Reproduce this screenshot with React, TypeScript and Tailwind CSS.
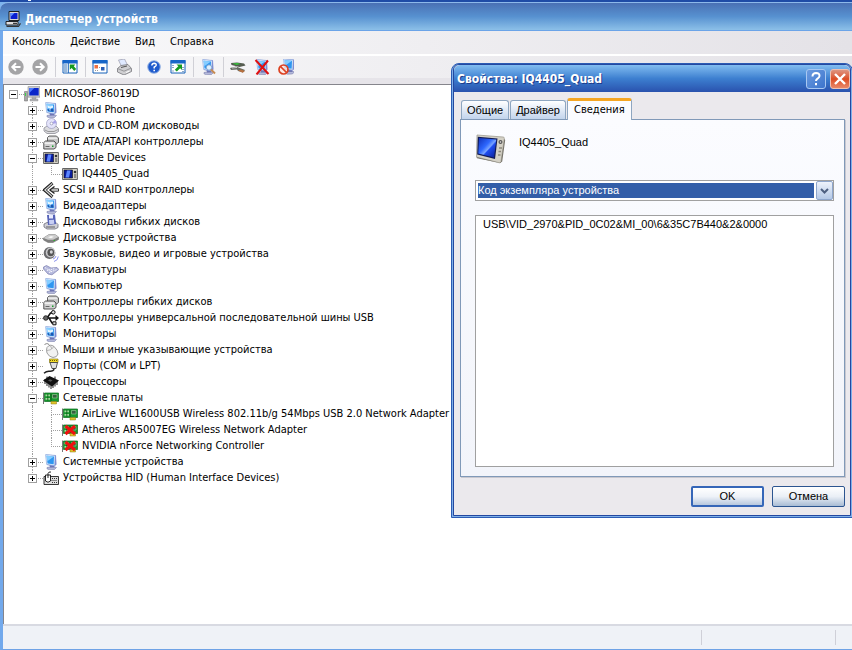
import React, { useState } from 'react';

type IconProps = { children: React.ReactNode; size?: string };

const Icon = ({ children, size = 'h-4 w-4' }: IconProps) => (
  <svg viewBox="0 0 16 16" className={`${size} shrink-0`} aria-hidden="true">
    {children}
  </svg>
);

/* ---------- Device icons ---------- */

const Monitor = () => (
  <>
    <path d="M4 13.500l6-1 3.500 1-2 2-5 .3-2.500-1z" fill="#b4b8da" stroke="#7a80ac" strokeWidth=".6" />
    <path d="M6.500 11h4.500l.5 2.500H7z" fill="#6f76b4" />
    <path d="M3 .6l10 .6.5 9.300-1.800 1.700L4 11z" fill="#7f8ad0" />
    <path d="M2.500 .6l9.600.8-.4 10.100-8-1z" fill="#e2f1ff" stroke="#86a4dc" strokeWidth=".6" />
    <path d="M3.600 1.800l7.400.6-.3 7.900-6.200-.8z" fill="#2f96f0" />
    <path d="M3.600 1.800l7.400.6-6.700 4.800z" fill="#86cdff" />
  </>
);

const ComputerIcon = () => <Icon><Monitor /></Icon>;

const DisplayIcon = () => (
  <Icon>
    <Monitor />
    <path d="M4.500 3.500l2.500 1 3-1v2l-2 1.500-3-1z" fill="#e6f6ff" />
    <path d="M4.500 7l2 .5 2-1 2 1v2.300l-5.500-.7z" fill="#1d55b0" />
    <path d="M6 7.800l2 .2" stroke="#9fe0ff" />
  </Icon>
);

const RootIcon = () => (
  <Icon>
    <path d="M.5 5.500h3V15h-3z" fill="#a8a8a8" stroke="#666" strokeWidth=".5" />
    <path d="M1.500 7v3" stroke="#3fd24a" />
    <path d="M4 .6h12v10.600H4z" fill="#cfcfd2" stroke="#8a8a8a" strokeWidth=".6" />
    <path d="M5.300 2h9.400v7.500H5.300z" fill="#0b26c9" />
    <path d="M5.300 2h5l-5 5z" fill="#4b78ff" />
    <path d="M8 11h4v2H8zM6 13h8v2H6z" fill="#b5b5b8" stroke="#909090" strokeWidth=".4" />
  </Icon>
);

const DvdIcon = () => (
  <Icon>
    <path d="M1 10l3-2h9l2.500 2.500v3L12 15.500H4L1 13z" fill="#dcdce0" stroke="#80808a" strokeWidth=".7" />
    <path d="M2 12l3 1.500h6l4-2" stroke="#888" strokeWidth=".8" fill="none" />
    <circle cx="8.500" cy="5.500" r="5" fill="#e4e4fa" stroke="#9a9abf" strokeWidth=".7" />
    <path d="M8.500 5.500L12 2a5 5 0 0 1 1.500 3.500z" fill="#a9a3ea" />
    <circle cx="8.500" cy="5.500" r="1.400" fill="#fff" stroke="#7f7fa8" strokeWidth=".6" />
  </Icon>
);

const DriveStackIcon = () => (
  <Icon>
    <path d="M4.500 3.500l1.500-1.500h7.500l2 2v4.500l-2 1.500h-9z" fill="#c8c8c8" stroke="#555" strokeWidth=".9" />
    <path d="M5 3.500h8.500l1 1.200H5z" fill="#f4f4f4" />
    <path d="M.8 8.500l1.700-1.500h8.500l2 2v4.500l-2 1.500H.8z" fill="#d0d0d0" stroke="#444" strokeWidth=".9" />
    <path d="M1.500 8.500h9l1.200 1.200H1.500z" fill="#fafafa" />
    <path d="M2.500 12.500h4" stroke="#666" />
    <path d="M9 11.500h1.500v1.500H9z" fill="#1b9b2b" />
  </Icon>
);

const PortableIcon = () => (
  <Icon>
    <path d="M.6 2.500h14.800v11H.6z" fill="#d6d3c8" stroke="#555" strokeWidth=".9" />
    <path d="M2 4h8.500v8H2z" fill="#0a1c9c" stroke="#111" strokeWidth=".6" />
    <path d="M5 4.500h3.500l-1.500 7H3.500z" fill="#5c86ff" />
    <circle cx="13" cy="6" r="1.300" fill="#333" />
    <path d="M12 9h2.200M12 11h2.200" stroke="#444" />
  </Icon>
);

const ScsiIcon = () => (
  <Icon>
    <path d="M9.500 1L1.500 8l8 7" fill="none" stroke="#222" strokeWidth="3" />
    <path d="M9.300 1.400L1.900 8l7.400 6.600" fill="none" stroke="#d8d8d8" strokeWidth="1.200" />
    <path d="M11.500 4.500L7 8l4.500 3.500" fill="none" stroke="#222" strokeWidth="1.400" />
    <path d="M8 6.800h7.500v2.400H8z" fill="#eee" stroke="#222" strokeWidth=".9" />
  </Icon>
);

const FloppyIcon = () => (
  <Icon>
    <path d="M1 10l3-1.500h9l2 2v3L12 15H4l-3-2z" fill="#cfcfd6" stroke="#6c6c78" strokeWidth=".8" />
    <path d="M4 1l8-.5 1 9.500-8 1z" fill="#5663b8" />
    <path d="M6 1h4v3.500H6z" fill="#e8ebff" />
    <path d="M6 6l5-.3.3 4-5 .5z" fill="#c9d0f5" />
    <path d="M3 13h9" stroke="#555" strokeWidth=".9" />
  </Icon>
);

const DiskIcon = () => (
  <Icon>
    <path d="M.5 8L6 4.500h6l3.500 2.500v2.500L10 12.500H5L.5 10z" fill="#808080" stroke="#666" strokeWidth=".5" />
    <path d="M.5 8L6 4.500h6L15.500 7 10 9.800H5z" fill="#cccccc" />
    <path d="M5 7.200l3-1.200 3 .8-3 1.500z" fill="#f6f6f6" />
    <path d="M10.500 11h1.500v-1h-1.500z" fill="#2bb12b" />
  </Icon>
);

const SoundIcon = () => (
  <Icon>
    <ellipse cx="6.500" cy="7" rx="5.800" ry="6" fill="#6b6b6e" />
    <ellipse cx="7.500" cy="6.500" rx="4.700" ry="5" fill="#c9c9cc" />
    <ellipse cx="7.800" cy="6.500" rx="3.400" ry="3.800" fill="#555" />
    <ellipse cx="8.300" cy="6" rx="1.500" ry="1.800" fill="#d5d5d8" />
    <path d="M10 13q2.500-.5 3-3M11 15.500q4-1 4.300-5" fill="none" stroke="#8d93ee" />
  </Icon>
);

const KeyboardIcon = () => (
  <Icon>
    <path d="M.5 5l3-1.500L8 6l6-.5 1.800 2L9 12.800 5 12 .5 7z" fill="#b4b8dc" stroke="#7c80b0" strokeWidth=".7" />
    <path d="M2 5.500l7 4.500M4 8.500l8-2M6 10.500l8-3" stroke="#fff" strokeWidth=".9" strokeDasharray="1.200 .8" />
  </Icon>
);

const UsbIcon = () => (
  <Icon>
    <path d="M2 8h12M4 8l3.500-5H10M6 8l3 5h2" fill="none" stroke="#111" strokeWidth="1.500" />
    <circle cx="2.800" cy="8" r="2.300" fill="#666" stroke="#111" strokeWidth=".8" />
    <path d="M12.500 5L16 8l-3.500 3z" fill="#111" />
    <circle cx="10.300" cy="2.300" r="1.800" fill="#ddd" stroke="#111" />
    <path d="M9.800 11.800H13v3H9.800z" fill="#ddd" stroke="#111" />
  </Icon>
);

const MouseIcon = () => (
  <Icon>
    <path d="M1.500 2.500q4-2.500 5.500 2" stroke="#777" strokeWidth=".9" fill="none" />
    <path d="M4 5.500q3-4 7-1 4 3.500 4 7.500-1 3.500-5 3.500-4-.5-6-4.500-1-3 0-5.500z" fill="#f2f2f2" stroke="#888" strokeWidth=".8" />
    <path d="M4 8.500q4 .5 7-4M7.500 4l1.500 3" stroke="#999" strokeWidth=".7" fill="none" />
  </Icon>
);

const PortIcon = () => (
  <Icon>
    <path d="M6.500 1h8.500v3.500H6.500z" fill="#f5dc2a" stroke="#6f6100" strokeWidth=".6" />
    <path d="M7 2.500h7" stroke="#6f6100" strokeDasharray="1 1" />
    <path d="M7 4.500h7.500L13 10.500H9z" fill="#e0e0e0" stroke="#333" strokeWidth=".8" />
    <path d="M11 10.500q0 3-4.500 2.700-3-.3-5.500 2" fill="none" stroke="#222" strokeWidth="1.500" />
  </Icon>
);

const CpuIcon = () => (
  <Icon>
    <path d="M2 7v3M4 8v4M6 9.500v4M8 11v4M10 10v4M12 8.500v4M14 7v4M4 2.500v3M12 2.500v3M2 5v2" stroke="#333" strokeWidth="1.100" />
    <path d="M0 6.500L6.500 2 16 6.500 9 12.500z" fill="#111" />
    <path d="M5 6.500l2-1.300 2.500 1.200-2 1.400z" fill="#555" />
  </Icon>
);

const Card = () => (
  <>
    <path d="M.5 2.500V14" stroke="#777" />
    <path d="M1.500 3h14v8.500h-14z" fill="#189a2e" stroke="#0a6a1c" strokeWidth=".7" />
    <path d="M2.500 4.500h4.500v1.700H2.500zM2.500 8h4.500v1.700H2.500z" fill="#a4dc9c" />
    <path d="M4.800 4v6.500M8 4v7" stroke="#075214" strokeWidth=".8" />
    <path d="M9.500 4.500h4.500v3.500H9.500z" fill="#37603f" stroke="#9fd09a" strokeWidth=".6" />
    <path d="M8 11.500h5.500V14H8z" fill="#e2c52b" stroke="#8f7a10" strokeWidth=".5" />
  </>
);

const NetIcon = () => <Icon><Card /></Icon>;

const NetDisabledIcon = () => (
  <Icon>
    <Card />
    <path d="M3.500 4l9.500 8M13 4l-9.500 8" stroke="#f01010" strokeWidth="3" />
  </Icon>
);

const HidIcon = () => (
  <Icon>
    <path d="M1 6.500h14.500v8H1z" fill="#ddd" stroke="#222" strokeWidth=".9" />
    <path d="M9 8.500h6M8.500 10.500h6M9 12.500h6" stroke="#333" strokeWidth="1" strokeDasharray="1 1" />
    <path d="M2.500 5h5v6q-2.500 2.500-5 0z" fill="#fff" stroke="#111" strokeWidth=".9" />
    <path d="M5 8V3.500q.5-2 3-1.500" stroke="#111" strokeWidth=".9" fill="none" />
  </Icon>
);

/* ---------- Toolbar icons ---------- */

const Arrow = ({ d }: { d: string }) => (
  <Icon>
    <circle cx="8" cy="8" r="7.700" fill="#a4a4a6" />
    <path d={d} stroke="#fff" strokeWidth="2" fill="none" />
  </Icon>
);

const PaneFrame = () => (
  <>
    <path d="M1 1.500h14v12.500H1z" fill="#fff" stroke="#1560b8" />
    <path d="M.5 1h15v3.500H.5z" fill="#1766c8" />
  </>
);

const TreePaneIcon = () => (
  <Icon>
    <PaneFrame />
    <path d="M2 6h3.500M2 8h3.500M2 10h3.500M2 12h3.500" stroke="#3474b8" />
    <path d="M6.500 4v10" stroke="#1560b8" strokeWidth=".8" />
    <path d="M7.800 5.500h5.500l-1.500 1.700 2.400 2.800-2 2-2.500-3-1.900 1.800z" fill="#169a20" />
  </Icon>
);

const PropertiesIcon = () => (
  <Icon>
    <PaneFrame />
    <path d="M2.500 6h3.500v3.500H2.500z" fill="#f07040" />
    <path d="M7 8.500h2M3 11.500h3" stroke="#999" strokeDasharray="1 1" />
    <path d="M9 8h3.500v3.500H9z" fill="#2b5fb5" />
  </Icon>
);

const PrinterIcon = () => (
  <Icon>
    <path d="M2.500 1l6-1 3 6-6 1.500z" fill="#dfe9ff" stroke="#99a" strokeWidth=".7" />
    <path d="M1.500 9.500L5 6.500l7-1 3.500 4v3L8 16l-6.500-3z" fill="#cfcfd2" stroke="#77777c" strokeWidth=".8" />
    <path d="M1.500 9.500L8 12.200l7-3" stroke="#88888c" fill="none" strokeWidth=".8" />
    <path d="M5 8.500l6-1.500" stroke="#555" />
    <path d="M10 13.500l3.500-1.500" stroke="#fff" />
  </Icon>
);

const HelpIcon = () => (
  <Icon>
    <circle cx="8" cy="8" r="6.300" fill="#1f5bcd" stroke="#9db9e6" />
    <path d="M5.800 6.500q.2-2.300 2.400-2.300 2.200.1 2 2-.2 1-2 2v1.300" stroke="#fff" strokeWidth="1.500" fill="none" />
    <path d="M7.400 10.800H9v1.500H7.400z" fill="#fff" />
  </Icon>
);

const ExportIcon = () => (
  <Icon>
    <PaneFrame />
    <path d="M2 6.500h2M2 8.500h2M2 12h2M12 8.500h2M12 10.500h2M12 12.500h2" stroke="#8aa8c8" />
    <path d="M6.500 5.500h5.500v5.500l-1.800-1.800-3.400 3.300-2-1.700L8.300 7.300z" fill="#169a20" />
  </Icon>
);

const ScanIcon = () => (
  <Icon>
    <Monitor />
    <circle cx="9" cy="8.500" r="2.700" fill="#dff1ff" stroke="#6f98c8" strokeWidth=".8" />
    <path d="M11 10.500l4 4" stroke="#c58a52" strokeWidth="2" />
  </Icon>
);

const UpdateIcon = () => (
  <Icon>
    <path d="M1 4l6-.5 7 1 1.500 2-6 1.500-8-2z" fill="#555c50" />
    <path d="M2.500 4.500l5-.5 3 1-4 1z" fill="#35c03a" />
    <path d="M0 9l6-1.500 9 3.500-2 2.500-5-1.500-1-1.500-6 .5z" fill="#666c62" />
    <path d="M8 11.500l3-1 4 1.500-2.500 1.800z" fill="#b8703f" />
    <path d="M2 9l5-.5" stroke="#ccc" />
  </Icon>
);

const RemoveIcon = () => (
  <Icon>
    <Monitor />
    <path d="M1.500 1l13 14M14 1.500L2.500 15.500" stroke="#e01010" strokeWidth="2" />
  </Icon>
);

const DisableIcon = () => (
  <Icon>
    <g transform="translate(3 -.6)"><Monitor /></g>
    <circle cx="5.500" cy="10.500" r="4.500" fill="#ffe4dc" fillOpacity=".7" stroke="#dc4020" strokeWidth="1.700" />
    <path d="M2.500 7.500l6 6" stroke="#dc4020" strokeWidth="1.700" />
  </Icon>
);

/* ---------- Tree ---------- */

interface TreeNode {
  label: string;
  icon: React.ReactNode;
  children?: TreeNode[];
  open?: boolean;
}

const devices: TreeNode = {
  label: 'MICROSOF-86019D',
  icon: <RootIcon />,
  open: true,
  children: [
    { label: 'Android Phone', icon: <DisplayIcon />, children: [] },
    { label: 'DVD и CD-ROM дисководы', icon: <DvdIcon />, children: [] },
    { label: 'IDE ATA/ATAPI контроллеры', icon: <DriveStackIcon />, children: [] },
    {
      label: 'Portable Devices',
      icon: <PortableIcon />,
      open: true,
      children: [{ label: 'IQ4405_Quad', icon: <PortableIcon /> }],
    },
    { label: 'SCSI и RAID контроллеры', icon: <ScsiIcon />, children: [] },
    { label: 'Видеоадаптеры', icon: <DisplayIcon />, children: [] },
    { label: 'Дисководы гибких дисков', icon: <FloppyIcon />, children: [] },
    { label: 'Дисковые устройства', icon: <DiskIcon />, children: [] },
    { label: 'Звуковые, видео и игровые устройства', icon: <SoundIcon />, children: [] },
    { label: 'Клавиатуры', icon: <KeyboardIcon />, children: [] },
    { label: 'Компьютер', icon: <ComputerIcon />, children: [] },
    { label: 'Контроллеры гибких дисков', icon: <DriveStackIcon />, children: [] },
    { label: 'Контроллеры универсальной последовательной шины USB', icon: <UsbIcon />, children: [] },
    { label: 'Мониторы', icon: <DisplayIcon />, children: [] },
    { label: 'Мыши и иные указывающие устройства', icon: <MouseIcon />, children: [] },
    { label: 'Порты (COM и LPT)', icon: <PortIcon />, children: [] },
    { label: 'Процессоры', icon: <CpuIcon />, children: [] },
    {
      label: 'Сетевые платы',
      icon: <NetIcon />,
      open: true,
      children: [
        { label: 'AirLive WL1600USB Wireless 802.11b/g 54Mbps USB 2.0 Network Adapter', icon: <NetIcon /> },
        { label: 'Atheros AR5007EG Wireless Network Adapter', icon: <NetDisabledIcon /> },
        { label: 'NVIDIA nForce Networking Controller', icon: <NetDisabledIcon /> },
      ],
    },
    { label: 'Системные устройства', icon: <ComputerIcon />, children: [] },
    { label: 'Устройства HID (Human Interface Devices)', icon: <HidIcon />, children: [] },
  ],
};

interface TreeItemProps {
  node: TreeNode;
  // for every ancestor column: does its line go on below this row
  guides: boolean[];
  isLast: boolean;
  isRoot?: boolean;
}

const TreeItem: React.FC<TreeItemProps> = ({ node, guides, isLast, isRoot = false }) => {
  const [open, setOpen] = useState(!!node.open);
  const line = 'border-dotted border-[#a0a0a0]';

  return (
    <li role="treeitem" aria-expanded={node.children ? open : undefined}>
      <div className="flex h-4 items-center whitespace-nowrap">
        {guides.map((on, i) => (
          <span key={i} className="flex h-4 w-[19px] shrink-0 pl-2">
            {on && <span className={`h-4 border-l ${line}`} />}
          </span>
        ))}
        <span className="relative flex h-4 w-[19px] shrink-0 flex-col pl-2">
          <span className={`h-[9px] border-b ${line} ${isRoot ? '' : 'border-l'}`} />
          <span className={`h-[7px] ${line} ${isLast ? '' : 'border-l'}`} />
          {node.children && (
            <button
              type="button"
              aria-label={`${open ? 'Свернуть' : 'Развернуть'} ${node.label}`}
              onClick={() => setOpen(!open)}
              className="absolute top-1 left-1 flex h-[9px] w-[9px] items-center justify-center border border-[#a0a0a0] bg-white"
            >
              <svg viewBox="0 0 5 5" className="h-[5px] w-[5px]" shapeRendering="crispEdges">
                <path d="M0 2h5v1H0z" />
                {!open && <path d="M2 0h1v5H2z" />}
              </svg>
            </button>
          )}
        </span>
        {node.icon}
        <span className="pl-1">{node.label}</span>
      </div>
      {open && node.children && node.children.length > 0 && (
        <ul role="group">
          {node.children.map((child, i) => (
            <TreeItem
              key={child.label}
              node={child}
              guides={isRoot ? [false] : [...guides, !isLast]}
              isLast={i === node.children!.length - 1}
            />
          ))}
        </ul>
      )}
    </li>
  );
};

/* ---------- Main window ---------- */

const menu = ['Консоль', 'Действие', 'Вид', 'Справка'];

const toolbar: { label: string; icon: React.ReactNode }[][] = [
  [
    { label: 'Назад', icon: <Arrow d="M12.500 8H4.500M8 4.300L4.300 8 8 11.700" /> },
    { label: 'Вперед', icon: <Arrow d="M3.500 8h8M8 4.300L11.700 8 8 11.700" /> },
  ],
  [{ label: 'Дерево консоли', icon: <TreePaneIcon /> }],
  [
    { label: 'Свойства', icon: <PropertiesIcon /> },
    { label: 'Печать', icon: <PrinterIcon /> },
  ],
  [
    { label: 'Справка', icon: <HelpIcon /> },
    { label: 'Экспорт', icon: <ExportIcon /> },
  ],
  [{ label: 'Обновить конфигурацию', icon: <ScanIcon /> }],
  [
    { label: 'Обновить драйвер', icon: <UpdateIcon /> },
    { label: 'Удалить', icon: <RemoveIcon /> },
    { label: 'Отключить', icon: <DisableIcon /> },
  ],
];

const TitleBar = () => (
  <header>
    <div className="h-[2px] bg-[#1f4ba6] pl-7">
      <div className="h-px w-[3px] bg-white" />
    </div>
    <div className="flex h-[29px] items-center gap-1 rounded-tl-lg border-t border-b border-t-[#8db8ea] border-b-[#6ba4e8] bg-linear-to-b from-[#4a70b4] via-[#5791d0] to-[#8cc0e8] pt-1 pl-[5px]">
      <Icon>
        <path d="M4 .5h10v9H4z" fill="#d8d8d8" stroke="#111" strokeWidth=".9" />
        <path d="M5.500 2h7v6h-7z" fill="#0a1ed0" />
        <path d="M5.500 2h4l-4 4z" fill="#5a8cff" />
        <path d="M1 10.500h12v3.500H1z" fill="#e0e0e0" stroke="#111" strokeWidth=".9" />
        <path d="M8 12.300h4" stroke="#111" />
        <path d="M1.500 15.300h12l2-3" stroke="#333" strokeWidth="1.200" fill="none" />
      </Icon>
      <h1 className="text-[12px] font-bold text-white">Диспетчер устройств</h1>
    </div>
  </header>
);

const ToolBar = () => (
  <div role="toolbar" className="flex h-6 items-center border-t-2 border-white bg-linear-to-r from-[#fafafb] to-[#e4e2e7] pl-px">
    {toolbar.map((group, i) => (
      <React.Fragment key={i}>
        {i > 0 && (
          <span className="flex h-5 w-[6px] justify-center">
            <span className="w-px bg-[#d0d0d6]" />
          </span>
        )}
        {group.map((item) => (
          <button key={item.label} type="button" title={item.label} className="flex h-5 w-6 items-center justify-center">
            {item.icon}
          </button>
        ))}
      </React.Fragment>
    ))}
  </div>
);

/* ---------- Properties dialog ---------- */

const tabs = ['Общие', 'Драйвер', 'Сведения'];

const PropertiesDialog = () => {
  const [active, setActive] = useState('Сведения');

  return (
    <section
      role="dialog"
      aria-labelledby="dialog-title"
      className="absolute top-[63px] -right-px left-[451px] rounded-t-lg border border-[#2c5cb4] bg-[#7fb0e8] px-px pb-px font-['Liberation_Sans',sans-serif]"
    >
      <div className="rounded-t-md border border-[#2448a0] bg-[#ebe9ed]">
        <div className="flex h-[27px] items-center gap-1 rounded-t-md bg-linear-to-b from-[#82bdf0] via-[#3d7fd0] to-[#2a52ae] pl-[3px]">
          <h2 id="dialog-title" className="flex-1 font-['DejaVu_Sans_Condensed',sans-serif] text-[12px] font-bold text-white [text-shadow:1px_1px_0_#1c3c8c]">
            Свойства: IQ4405_Quad
          </h2>
          <button type="button" aria-label="Справка" className="flex h-5 w-5 items-center justify-center rounded-[3px] border border-[#a9c8f2] bg-linear-to-br from-[#6b9be0] to-[#3c74cc]">
            <svg viewBox="0 0 16 16" className="h-4 w-4">
              <path d="M4.500 5.500q0-3.500 3.600-3.500 3.500.1 3.400 3-.1 1.500-2 2.600-1.500.9-1.500 2.400" stroke="#fff" strokeWidth="2" fill="none" />
              <path d="M7 12h2v2.200H7z" fill="#fff" />
            </svg>
          </button>
          <button type="button" aria-label="Закрыть" className="flex h-5 w-5 items-center justify-center rounded-[3px] border border-[#f0c0b0] bg-linear-to-b from-[#dc9480] via-[#dc4c22] to-[#e88868]">
            <svg viewBox="0 0 16 16" className="h-4 w-4">
              <path d="M3 3l10 10M13 3L3 13" stroke="#fff" strokeWidth="2.400" />
            </svg>
          </button>
        </div>

        <div className="pt-[6px] pr-[5px] pb-2 pl-[6px]">
          <div role="tablist" className="relative flex items-end px-px text-[11px]">
            {tabs.map((tab) => (
              <button
                key={tab}
                type="button"
                role="tab"
                aria-selected={tab === active}
                onClick={() => setActive(tab)}
                className={
                  tab === active
                    ? "-mb-px h-[22px] rounded-t-[3px] border border-t-[3px] border-b-0 border-[#8ea6c0] border-t-[#f5a623] bg-[#fbfcff] px-[6px] font-['DejaVu_Sans_Condensed',sans-serif]"
                    : 'mr-px h-[19px] rounded-t-[3px] border border-b-0 border-[#8ea6c0] bg-linear-to-b from-white to-[#c2d4ec] px-[5px]'
                }
              >
                {tab}
              </button>
            ))}
          </div>

          <div role="tabpanel" className="border border-[#8099b8] bg-linear-to-b from-[#fbfcff] to-[#f2f4fa] pt-[14px] pr-[10px] pb-[9px] pl-[14px] shadow-[1px_1px_0_#c8c8d0]">
            <div className="flex items-start gap-3">
              <svg viewBox="0 0 32 32" className="h-8 w-8 shrink-0" aria-hidden="true">
                <defs>
                  <linearGradient id="screen" x1="0" y1="0" x2="1" y2="1">
                    <stop offset="0" stopColor="#1030b8" />
                    <stop offset=".4" stopColor="#2e68ff" />
                    <stop offset=".55" stopColor="#7aa4ff" />
                    <stop offset=".6" stopColor="#1e4cf0" />
                    <stop offset="1" stopColor="#0a1c90" />
                  </linearGradient>
                </defs>
                <path d="M2 1l26 2q1.500 0 1.300 1.500L26 27.500q-.3 1.500-1.600 1.300L1.500 23z" fill="#d4d1c6" stroke="#a09d92" strokeWidth=".8" />
                <path d="M1.500 23l23 5.800 1.500-1L29.300 5l.9 1-3 21.500-2 1.500L2 24.200z" fill="#77746a" />
                <path d="M2.800 2.800L22.500 4.500 20 25 2.200 20.500z" fill="#111a55" />
                <path d="M4 4l17.300 1.500L19 23.500 3.300 19.500z" fill="url(#screen)" />
                <circle cx="25.500" cy="8" r="2" fill="#555" />
                <circle cx="25.500" cy="8" r=".8" fill="#eee" />
                <path d="M24 14h3M23.500 17.500h2.500M23 21h2.500" stroke="#8b887c" strokeWidth="1.300" />
              </svg>
              <p className="leading-4 text-[11px]">IQ4405_Quad</p>
            </div>

            <div className="relative mt-[14px] border border-[#a0a0a0] bg-white p-[2px] pr-[19px]">
              <select
                aria-label="Свойство"
                className="block h-[15px] w-full appearance-none bg-[#335ea8] text-[11px] leading-[15px] text-white"
              >
                <option>Код экземпляра устройства</option>
              </select>
              <span className="pointer-events-none absolute inset-y-0 right-0 flex w-[17px] items-center justify-center rounded-[2px] border border-[#8ea6cc] bg-linear-to-b from-[#eef3fb] to-[#b4c8e6]">
                <svg viewBox="0 0 9 6" className="h-[6px] w-[9px]">
                  <path d="M1 1l3.500 3.500L8 1" stroke="#4d5f80" strokeWidth="2" fill="none" />
                </svg>
              </span>
            </div>

            <textarea
              readOnly
              aria-label="Значение"
              defaultValue="USB\VID_2970&amp;PID_0C02&amp;MI_00\6&amp;35C7B440&amp;2&amp;0000"
              className="mt-[14px] block h-[252px] w-full resize-none border border-[#a0a0a0] bg-white px-[7px] text-[11px] leading-4"
            />
          </div>

          <div className="flex justify-end gap-2 pt-[9px] text-[11px]">
            <button type="button" className="h-[21px] w-[73px] rounded-[2px] border-2 border-[#3566b8] bg-linear-to-b from-white via-[#eef2f8] to-[#b8c8de]">
              OK
            </button>
            <button type="button" className="h-[21px] w-[73px] rounded-[2px] border border-[#2c5590] bg-linear-to-b from-white via-[#eaeff6] to-[#a9bcd4]">
              Отмена
            </button>
          </div>
        </div>
      </div>
    </section>
  );
};

const App: React.FC = () => {
  return (
    <div className="relative flex min-h-screen flex-col overflow-hidden bg-[#7db4ee] font-['DejaVu_Sans_Condensed',sans-serif] text-[11px] text-black">
      <TitleBar />
      <div className="flex flex-1 flex-col border-b border-l-[3px] border-b-[#6fa3e6] border-l-[#72a9ec] bg-[#e6e4e9]">
        <nav className="flex h-[23px] items-center gap-[15px] bg-linear-to-r from-[#fafafb] to-[#e4e2e7] pl-[9px]">
          {menu.map((item) => (
            <button key={item} type="button">{item}</button>
          ))}
        </nav>
        <ToolBar />
        <main className="mt-[6px] flex-1 border-t border-l border-[#85858c] bg-white pt-px pl-px">
          <ul role="tree">
            <TreeItem node={devices} guides={[]} isLast isRoot />
          </ul>
        </main>
        <footer className="flex h-[25px] justify-end border-t-2 border-[#d8dae2] bg-[#eff2f7] py-1">
          <span className="w-[134px] border-l border-[#cfd0d8]" />
          <span className="w-[17px] border-l border-[#cfd0d8]" />
        </footer>
      </div>
      <PropertiesDialog />
    </div>
  );
};

export default App;
